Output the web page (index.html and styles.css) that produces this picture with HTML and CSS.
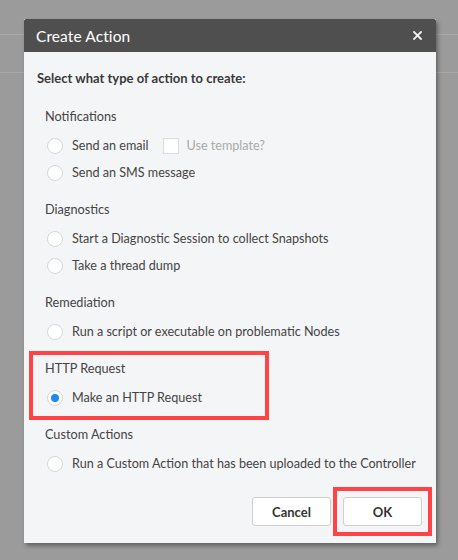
FILE: index.html
```html
<!DOCTYPE html>
<html>
<head>
<meta charset="utf-8">
<link rel="stylesheet" href="styles.css">
</head>
<body>
<div class="backdrop">
  <div class="dialog">
    <div class="dialog-header">
      <span class="dialog-title">Create Action</span>
      <span class="dialog-close">
        <svg width="9" height="9" viewBox="0 0 9 9"><path d="M1 1L8 8M8 1L1 8" stroke="#f2f2f2" stroke-width="1.8" stroke-linecap="square"/></svg>
      </span>
    </div>
    <div class="dialog-body">
      <div class="prompt">Select what type of action to create:</div>

      <div class="section">
        <div class="section-label">Notifications</div>
        <div class="option">
          <span class="radio"></span><span class="option-text">Send an email</span>
          <span class="checkbox"></span><span class="muted">Use template?</span>
        </div>
        <div class="option"><span class="radio"></span><span class="option-text">Send an SMS message</span></div>
      </div>

      <div class="section">
        <div class="section-label">Diagnostics</div>
        <div class="option"><span class="radio"></span><span class="option-text">Start a Diagnostic Session to collect Snapshots</span></div>
        <div class="option"><span class="radio"></span><span class="option-text">Take a thread dump</span></div>
      </div>

      <div class="section">
        <div class="section-label">Remediation</div>
        <div class="option"><span class="radio"></span><span class="option-text">Run a script or executable on problematic Nodes</span></div>
      </div>

      <div class="section highlight">
        <div class="section-label">HTTP Request</div>
        <div class="option"><span class="radio checked"></span><span class="option-text">Make an HTTP Request</span></div>
      </div>

      <div class="section">
        <div class="section-label">Custom Actions</div>
        <div class="option"><span class="radio"></span><span class="option-text">Run a Custom Action that has been uploaded to the Controller</span></div>
      </div>

      <div class="footer">
        <button class="btn">Cancel</button>
        <button class="btn btn-marked">OK</button>
      </div>
    </div>
  </div>
</div>
</body>
</html>
```
FILE: styles.css
```css
html, body {
  margin: 0;
  padding: 0;
}
body {
  width: 458px;
  height: 560px;
  overflow: hidden;
  background: #9b9b9b;
  font-family: "Lato", "Open Sans", sans-serif;
  color: #333;
}
.backdrop {
  height: 560px;
  background:
    linear-gradient(#aaaaaa, #aaaaaa) 0 34px / 100% 1px no-repeat,
    linear-gradient(#aaaaaa, #aaaaaa) 0 72px / 100% 1px no-repeat,
    #9b9b9b;
  padding: 19px 0 0 24px;
  box-sizing: border-box;
}
.dialog {
  width: 412px;
  height: 524px;
  background: #f4f5f7;
  box-shadow: 2px 3px 4px rgba(0,0,0,0.35);
  display: flex;
  flex-direction: column;
}
.dialog-header {
  height: 33px;
  background: #4f4f4f;
  border-radius: 2px 2px 0 0;
  display: flex;
  align-items: center;
  justify-content: space-between;
  padding: 0 14px 0 12px;
  box-sizing: border-box;
}
.dialog-title {
  color: #fff;
  font-size: 15.5px;
  letter-spacing: 0.1px;
}
.dialog-close {
  display: flex;
  align-items: center;
}
.dialog-body {
  padding: 18px 14px 0 13px;
  flex: 1;
  display: flex;
  flex-direction: column;
}
.prompt {
  font-weight: bold;
  font-size: 13px;
  line-height: 16px;
  color: #3a3a3a;
  margin-bottom: 20px;
}
.section {
  padding-left: 8px;
  margin-bottom: 13px;
}
.section-label {
  font-size: 12.7px;
  line-height: 20px;
  color: #444;
  margin-bottom: 6px;
}
.option {
  height: 27px;
  display: flex;
  align-items: center;
  padding-left: 2px;
  font-size: 12.6px;
  color: #444;
  white-space: nowrap;
}
.radio {
  width: 14px;
  height: 14px;
  border-radius: 50%;
  border: 1px solid #d6d6d6;
  background: #fff;
  margin-right: 9px;
  flex: none;
  display: flex;
  align-items: center;
  justify-content: center;
}
.radio.checked::after {
  content: "";
  width: 8px;
  height: 8px;
  border-radius: 50%;
  background: #1e88f5;
}
.checkbox {
  width: 14px;
  height: 14px;
  border: 1px solid #dcdcdc;
  background: #fff;
  margin-left: 14px;
  margin-right: 8px;
  flex: none;
}
.muted {
  color: #aaa;
}
.highlight {
  position: relative;
}
.highlight::after {
  content: "";
  position: absolute;
  left: -8px;
  top: -7px;
  width: 232px;
  height: 61px;
  border: 4px solid #ff4448;
}
.footer {
  display: flex;
  justify-content: flex-end;
  gap: 12px;
  margin-top: 7px;
}
.btn {
  width: 79px;
  height: 29px;
  background: #fff;
  border: 1px solid #cfcfcf;
  border-radius: 3px;
  font-family: "Lato", "Open Sans", sans-serif;
  font-weight: bold;
  font-size: 13px;
  color: #333;
  padding: 0;
}
.btn-marked {
  position: relative;
}
.btn-marked::after {
  content: "";
  position: absolute;
  left: -11px;
  top: -11px;
  right: -11px;
  bottom: -11px;
  border: 4px solid #ff4448;
}
```
